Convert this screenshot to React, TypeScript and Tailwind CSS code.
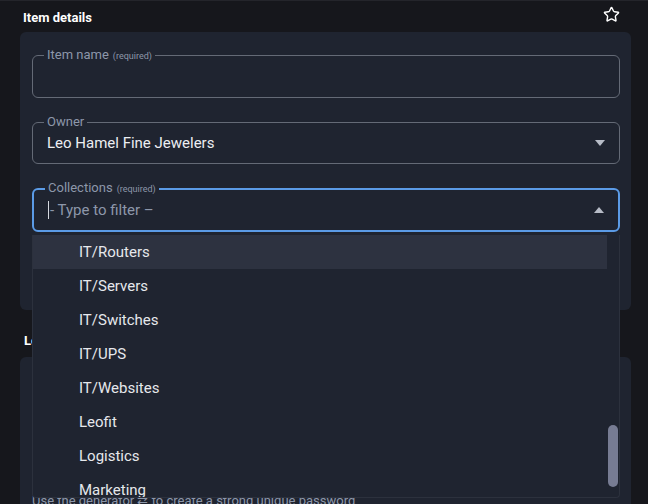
import { Star } from 'lucide-react';

const collections = [
  'IT/Routers',
  'IT/Servers',
  'IT/Switches',
  'IT/UPS',
  'IT/Websites',
  'Leofit',
  'Logistics',
  'Marketing',
];

function Field({
  label,
  required,
  focused,
  children,
}: {
  label: string;
  required?: boolean;
  focused?: boolean;
  children?: React.ReactNode;
}) {
  return (
    <fieldset
      className={`rounded-[6px] pl-[11px] pr-[14px] ${
        focused ? 'border-2 border-[#5b9be6] pl-[10px]' : 'border border-[#646a76]'
      }`}
    >
      <legend className="px-[3px] text-[13px] leading-[14px] text-[#8d97aa]">
        {label}
        {required && <span className="ml-1 text-[9px] text-[#8d97aa]">(required)</span>}
      </legend>
      <div className="flex h-[34px] items-center pb-[6px] pl-[3px]">{children}</div>
    </fieldset>
  );
}

function Caret({ up }: { up?: boolean }) {
  return (
    <svg width="10" height="6" viewBox="0 0 10 6" className="ml-auto">
      {up ? <path d="M0 6 L5 0 L10 6 Z" fill="#b7bcc7" /> : <path d="M0 0 L10 0 L5 6 Z" fill="#b7bcc7" />}
    </svg>
  );
}

export default function App() {
  return (
    <div
      className="relative h-[504px] w-[648px] overflow-hidden border-t border-[#24252b] bg-[#16171c] pl-[20px] pr-[17px] text-[#e6e8ec]"
      style={{ fontFamily: 'Roboto, "Liberation Sans", sans-serif' }}
    >
      {/* header */}
      <div className="flex h-[31px] items-center justify-between pl-[3px] pr-[11px]">
        <h2 className="pt-[3px] text-[13px] font-bold text-white">Item details</h2>
        <Star size={17} strokeWidth={2} className="-mt-[4px] text-white" />
      </div>

      {/* item details card */}
      <div className="h-[278px] rounded-[6px] bg-[#1f2430] pl-[12px] pr-[11px] pt-[16px]">
        <div className="flex flex-col gap-[17px]">
          <Field label="Item name" required />
          <Field label="Owner">
            <span className="text-[15px] text-[#eceef2]">Leo Hamel Fine Jewelers</span>
            <Caret />
          </Field>
          <Field label="Collections" required focused>
            <span className="mr-[1px] h-[18px] w-px bg-[#d5d9e0]" />
            <span className="text-[15px] text-[#8d97aa]">- Type to filter –</span>
            <Caret up />
          </Field>
        </div>
      </div>

      {/* login section */}
      <div className="flex h-[47px] items-end pb-[7px] pl-[4px]">
        <h2 className="text-[13px] font-bold text-white">Login</h2>
      </div>
      <div className="h-[160px] rounded-[6px] bg-[#1f2430] px-[12px] pt-[134px]">
        <p className="text-[13px] text-[#8d97aa]">Use the generator ⇄ to create a strong unique password</p>
      </div>

      {/* collections dropdown */}
      <div className="absolute left-[32px] top-[234px] h-[263px] w-[588px] overflow-hidden rounded-b-[4px] border border-t-0 border-[#2c313d] bg-[#1f2430]">
        <ul className="pr-[12px]">
          {collections.map((c, i) => (
            <li
              key={c}
              className={`flex h-[34px] items-center pl-[46px] text-[15px] text-[#e6e8ec] ${
                i === 0 ? 'bg-[#2d3240]' : ''
              }`}
            >
              {c}
            </li>
          ))}
        </ul>
        <div className="absolute right-[1px] top-[190px] h-[62px] w-[10px] rounded-full bg-[#777c93]" />
      </div>
    </div>
  );
}
